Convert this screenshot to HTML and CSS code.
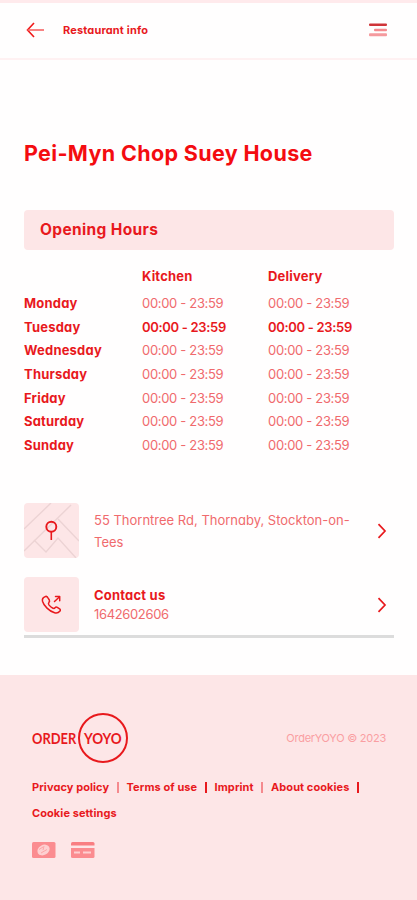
FILE: index.html
```html
<!DOCTYPE html>
<html lang="en">
<head>
    <meta charset="UTF-8">
    <meta name="viewport" content="width=device-width, initial-scale=1.0">
    <title>Restaurant info</title>
    <link rel="stylesheet" href="styles.css">
</head>
<body>
    <header class="topbar">
        <a class="back" href="#" aria-label="Back">
            <svg width="19" height="16" viewBox="0 0 19 16" fill="none" stroke="#f01818" stroke-width="1.6">
                <path d="M8 1 L1.5 8 L8 15"/>
                <path d="M1.5 8 H18" stroke="#f76464"/>
            </svg>
        </a>
        <span class="topbar-title">Restaurant info</span>
        <svg class="menu" width="18" height="14" viewBox="0 0 18 14">
            <rect x="0" y="0.5" width="18" height="2.6" rx="1" fill="#cf3438"/>
            <rect x="5" y="5.8" width="13" height="2.4" rx="1" fill="#f58a8e"/>
            <rect x="0" y="10.2" width="18" height="3" rx="1" fill="#f59a9e"/>
        </svg>
    </header>

    <main>
        <h1>Pei-Myn Chop Suey House</h1>
        <h2>Opening Hours</h2>

        <div class="hours">
            <div class="row head"><b></b><b>Kitchen</b><b>Delivery</b></div>
            <div class="row"><b>Monday</b><span>00:00 - 23:59</span><span>00:00 - 23:59</span></div>
            <div class="row today"><b>Tuesday</b><span>00:00 - 23:59</span><span>00:00 - 23:59</span></div>
            <div class="row"><b>Wednesday</b><span>00:00 - 23:59</span><span>00:00 - 23:59</span></div>
            <div class="row"><b>Thursday</b><span>00:00 - 23:59</span><span>00:00 - 23:59</span></div>
            <div class="row"><b>Friday</b><span>00:00 - 23:59</span><span>00:00 - 23:59</span></div>
            <div class="row"><b>Saturday</b><span>00:00 - 23:59</span><span>00:00 - 23:59</span></div>
            <div class="row"><b>Sunday</b><span>00:00 - 23:59</span><span>00:00 - 23:59</span></div>
        </div>

        <div class="cards">
            <a class="card" href="#">
                <svg class="tile" width="55" height="55" viewBox="0 0 55 55" fill="none">
                    <g stroke="#ecd3d4" stroke-width="1.4">
                        <path d="M0 26 L27 0"/>
                        <path d="M0 48 L47 2"/>
                        <path d="M34 16 L55 38"/>
                        <path d="M10 37 L22 49 L34 35 L52 55"/>
                    </g>
                    <circle cx="27.3" cy="23.7" r="5" stroke="#e8191d" stroke-width="1.9"/>
                    <path d="M27.3 28.7 V37" stroke="#e8191d" stroke-width="1.6"/>
                </svg>
                <div class="card-text address">55 Thorntree Rd, Thornaby, Stockton-on-<br>Tees</div>
                <svg class="chevron" width="10" height="16" viewBox="0 0 10 16" fill="none" stroke="#e8191d" stroke-width="1.7">
                    <path d="M1.5 1.2 L8 8 L1.5 14.8"/>
                </svg>
            </a>
            <a class="card" href="#">
                <svg class="tile" width="55" height="55" viewBox="0 0 55 55" fill="none" stroke="#e8191d" stroke-width="1.5" stroke-linecap="round" stroke-linejoin="round">
                    <path d="M21 19.7 Q22.8 18.8 23.8 20.6 L25.3 23 Q26 24.3 24.9 25.4 Q23.9 26.5 25.1 28.1 Q26.9 30.3 29 31.2 Q30.2 31.8 31 30.7 Q32 29.6 33.3 30.4 L35.6 31.9 Q37 32.9 35.8 34.3 Q33.8 36.7 30.6 35.8 Q26.6 34.6 23 31.1 Q19.4 27.5 18.5 24.2 Q17.8 21 21 19.7 Z"/>
                    <path d="M30.5 24.5 L35.3 20"/>
                    <path d="M31.5 19.6 H35.7 V23.8"/>
                </svg>
                <div class="card-text"><b>Contact us</b><span>1642602606</span></div>
                <svg class="chevron" width="10" height="16" viewBox="0 0 10 16" fill="none" stroke="#e8191d" stroke-width="1.7">
                    <path d="M1.5 1.2 L8 8 L1.5 14.8"/>
                </svg>
            </a>
        </div>
    </main>

    <footer>
        <div class="brand">
            <div class="logo">
                <span class="logo-order">ORDER</span>
                <span class="logo-ring"><span class="logo-yoyo">YOYO</span></span>
            </div>
            <span class="copyright">OrderYOYO © 2023</span>
        </div>
        <nav class="links">
            <a href="#">Privacy policy</a><i class="pale"></i>
            <a href="#">Terms of use</a><i></i>
            <a href="#">Imprint</a><i class="pale"></i>
            <a href="#">About cookies</a><i></i>
        </nav>
        <nav class="links">
            <a href="#">Cookie settings</a>
        </nav>
        <div class="payments">
            <svg width="24" height="16" viewBox="0 0 24 16">
                <rect width="23.5" height="16" rx="1.5" fill="#fb8c90"/>
                <ellipse cx="11.5" cy="8" rx="6.5" ry="5" fill="#fdd0d1" transform="rotate(-30 11.5 8)"/>
                <path d="M7 7.5 L11 5 M9 11 L15 7.5 M12 4 L11 8" stroke="#fb9a9d" stroke-width="0.8"/>
            </svg>
            <svg width="24" height="16" viewBox="0 0 24 16">
                <path d="M0 3.5 V1.5 Q0 0 1.5 0 H22 Q23.5 0 23.5 1.5 V3.5 Z" fill="#f97e82"/>
                <path d="M0 6 H23.5 V14.5 Q23.5 16 22 16 H1.5 Q0 16 0 14.5 Z" fill="#fb8c90"/>
                <path d="M3 10.5 H9 M12 10.5 H20" stroke="#fdd0d1" stroke-width="2"/>
            </svg>
        </div>
    </footer>
</body>
</html>
```

FILE: styles.css
```css
* {
    box-sizing: border-box;
}

body {
    margin: 0;
    height: 900px;
    display: flex;
    flex-direction: column;
    font-family: Inter, "Open Sans", sans-serif;
    font-feature-settings: "cv11";
    font-size: 13px;
    color: #e8191d;
    background: #fffefe;
}

a {
    color: inherit;
    text-decoration: none;
}

b {
    font-weight: 700;
    letter-spacing: 0.2px;
}

/* Top bar */
.topbar {
    height: 60px;
    padding: 0 30px 1px 26px;
    display: flex;
    align-items: center;
    border-top: 3px solid #ffeaec;
    border-bottom: 2px solid #fff1f2;
}

.back {
    display: flex;
}

.topbar-title {
    margin-left: 18px;
    padding-bottom: 1px;
    font-size: 11px;
    font-weight: 700;
    letter-spacing: 0.15px;
}

.menu {
    margin-left: auto;
}

/* Content */
main {
    flex: 1;
    padding: 0 23px 0 24px;
}

h1 {
    margin: 78px 0 0;
    font-size: 21.5px;
    line-height: 30px;
    font-weight: 650;
    letter-spacing: 0.35px;
    color: #f40c10;
    white-space: nowrap;
}

h2 {
    margin: 42px 0 0;
    height: 40px;
    padding-left: 16px;
    line-height: 39px;
    font-size: 15.5px;
    font-weight: 650;
    letter-spacing: 0.35px;
    border-radius: 4px;
    background: #fde6e7;
}

.hours {
    padding-top: 14.5px;
}

.row {
    display: grid;
    grid-template-columns: 118px 126px 1fr;
    height: 23.7px;
    line-height: 23.7px;
    white-space: nowrap;
}

.row.head {
    height: 27.5px;
}

.row span {
    color: #f06a6d;
    letter-spacing: -0.32px;
}

.row.today span {
    color: #e8191d;
    font-weight: 600;
}

.cards {
    margin-top: 45.6px;
    border-bottom: 3px solid #dcdcdc;
    display: flex;
    flex-direction: column;
    gap: 19px;
    padding-bottom: 3px;
}

.card {
    display: flex;
    align-items: center;
}

.tile {
    border-radius: 4px;
    background: #fde6e7;
}

.card-text {
    margin-left: 15px;
    display: flex;
    flex-direction: column;
    line-height: 19px;
    white-space: nowrap;
}

.card-text span {
    color: #f06a6d;
    letter-spacing: -0.35px;
}

.address {
    display: block;
    line-height: 22px;
    color: #f06a6d;
}

.chevron {
    margin-left: auto;
    margin-right: 7px;
}

/* Footer */
footer {
    height: 225px;
    padding: 38px 31px 0 32px;
    background: #fde6e7;
}

.brand {
    display: flex;
    align-items: center;
    justify-content: space-between;
}

.logo {
    display: flex;
    align-items: center;
    font-family: Lato, sans-serif;
    font-size: 15px;
    font-weight: 700;
    line-height: 1;
}

.logo-order {
    width: 46px;
    transform: scaleX(0.86);
    transform-origin: left;
}

.logo-ring {
    width: 50px;
    height: 50px;
    display: flex;
    align-items: center;
    justify-content: center;
    border: 2px solid #e8191d;
    border-radius: 50%;
}

.logo-yoyo {
    transform: scaleX(0.9);
}

.copyright {
    font-size: 11px;
    letter-spacing: -0.25px;
    color: #fa9ea2;
}

.links {
    height: 26px;
    display: flex;
    align-items: center;
    font-size: 11px;
    font-weight: 700;
    letter-spacing: 0.08px;
    white-space: nowrap;
}

.brand + .links {
    margin-top: 11px;
}

.links i {
    width: 2px;
    height: 11px;
    margin: 0 7.7px;
    background: #e8191d;
}

.links .pale {
    background: #f58a8e;
}

.payments {
    margin-top: 16px;
    display: flex;
    gap: 15px;
}
```
